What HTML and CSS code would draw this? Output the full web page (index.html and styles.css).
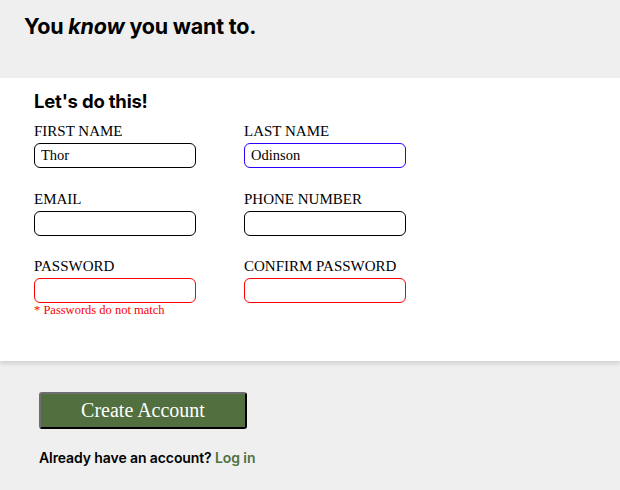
FILE: index.html
```html
<!DOCTYPE html>
<html>
<head>
<meta charset="utf-8">
<link rel="stylesheet" href="styles.css">
</head>
<body>
<header class="hero">
  <h1>You <em>know</em> you want to.</h1>
</header>
<section class="panel">
  <h2>Let's do this!</h2>
  <form class="grid">
    <div class="field">
      <label>FIRST NAME</label>
      <input class="input" type="text" value="Thor">
    </div>
    <div class="field">
      <label>LAST NAME</label>
      <input class="input focus" type="text" value="Odinson">
    </div>
    <div class="field">
      <label>EMAIL</label>
      <input class="input" type="text">
    </div>
    <div class="field">
      <label>PHONE NUMBER</label>
      <input class="input" type="text">
    </div>
    <div class="field">
      <label>PASSWORD</label>
      <input class="input error" type="password">
      <span class="err">* Passwords do not match</span>
    </div>
    <div class="field">
      <label>CONFIRM PASSWORD</label>
      <input class="input error" type="password">
    </div>
  </form>
</section>
<section class="actions">
  <button class="btn">Create Account</button>
  <p class="login">Already have an account? <a href="#">Log in</a></p>
</section>
</body>
</html>
```
FILE: styles.css
```css
html, body {
  margin: 0;
  padding: 0;
}
body {
  background: #efefef;
  font-family: "Liberation Serif", serif;
  width: 620px;
  height: 490px;
  overflow: hidden;
}
.hero {
  padding: 13px 24px 0;
  height: 78px;
  box-sizing: border-box;
}
.hero h1 {
  margin: 0;
  font-family: Inter, sans-serif;
  font-weight: 700;
  font-size: 21.5px;
  letter-spacing: -0.2px;
  line-height: 26px;
  color: #000;
}
.hero em {
  font-style: italic;
}
.panel {
  background: #fff;
  padding: 11px 34px 0;
  height: 283px;
  box-sizing: border-box;
  box-shadow: 0 3px 4px rgba(0,0,0,0.12);
  position: relative;
}
.panel h2 {
  margin: 0 0 9px;
  font-family: Inter, sans-serif;
  font-weight: 700;
  font-size: 18.5px;
  letter-spacing: -0.2px;
  line-height: 24px;
  color: #000;
}
.grid {
  display: grid;
  grid-template-columns: 162px 162px;
  column-gap: 48px;
  row-gap: 21.5px;
}
.field {
  display: flex;
  flex-direction: column;
  position: relative;
}
.field label {
  font-size: 15px;
  line-height: 18px;
  margin-bottom: 3px;
  color: #000;
}
.input {
  width: 162px;
  height: 25px;
  box-sizing: border-box;
  border: 1px solid #000;
  border-radius: 6px;
  padding: 0 6px;
  font-family: "Liberation Serif", serif;
  font-size: 14.5px;
  color: #000;
  background: #fff;
  outline: none;
}
.input.focus {
  border-color: #2f00ff;
}
.input.error {
  border-color: #f00;
}
.err {
  position: absolute;
  top: 46px;
  left: 0;
  font-size: 12.5px;
  color: #f00;
  line-height: 14px;
}
.actions {
  padding: 31px 39px 0;
}
.btn {
  display: block;
  width: 208px;
  height: 37px;
  background: #52703f;
  color: #fff;
  font-family: "Liberation Serif", serif;
  font-size: 20px;
  border: 2px outset #6e6e6e;
  border-right-color: #1c1c1c;
  border-bottom-color: #1c1c1c;
  border-radius: 3px;
  padding: 0;
}
.login {
  margin: 20px 0 0;
  font-family: Inter, sans-serif;
  font-weight: 600;
  font-size: 14px;
  letter-spacing: -0.1px;
  color: #000;
}
.login a {
  color: #4f7042;
  text-decoration: none;
}
```
